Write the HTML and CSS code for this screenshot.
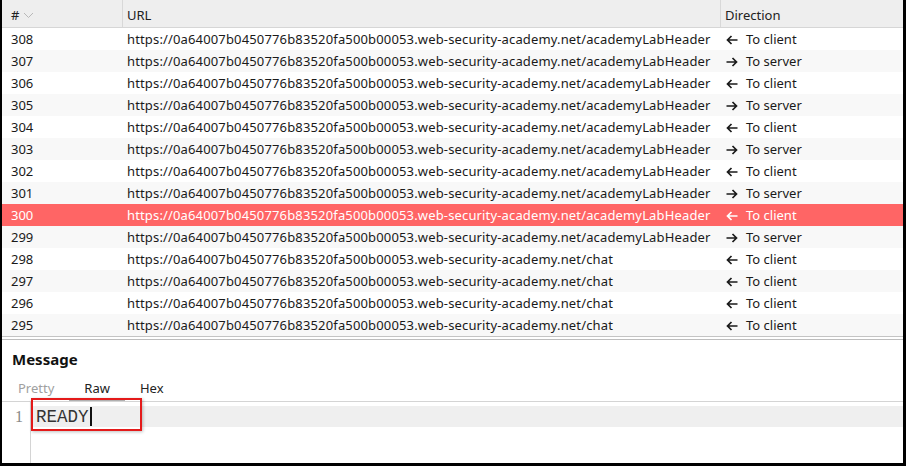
FILE: index.html
```html
<!DOCTYPE html>
<html>
<head>
<meta charset="utf-8">
<link rel="stylesheet" href="styles.css">
</head>
<body>
<div class="frame">
  <div class="table">
    <div class="thead">
      <div class="th th-num"># <svg class="sort" width="11" height="7" viewBox="0 0 11 7"><path d="M1 1 L5.5 5.5 L10 1" fill="none" stroke="#b8b8b8" stroke-width="1"/></svg></div>
      <div class="th th-url">URL</div>
      <div class="th th-dir">Direction</div>
    </div>
    <div class="tbody" id="rows"></div>
  </div>
  <div class="sep"></div>
  <div class="message">
    <div class="msg-title">Message</div>
    <div class="tabs">
      <span class="tab tab-muted">Pretty</span>
      <span class="tab tab-active">Raw</span>
      <span class="tab">Hex</span>
    </div>
    <div class="editor">
      <div class="gutter"><div class="ln">1</div></div>
      <div class="code">
        <div class="line current"><span class="ready">READY</span><span class="caret"></span></div>
      </div>
      <div class="redbox"></div>
    </div>
  </div>
</div>
<script>
const base = "https://0a64007b0450776b83520fa500b00053.web-security-academy.net/";
const data = [
  [308,"academyLabHeader","c"],[307,"academyLabHeader","s"],[306,"academyLabHeader","c"],
  [305,"academyLabHeader","s"],[304,"academyLabHeader","c"],[303,"academyLabHeader","s"],
  [302,"academyLabHeader","c"],[301,"academyLabHeader","s"],[300,"academyLabHeader","c"],
  [299,"academyLabHeader","s"],[298,"chat","c"],[297,"chat","c"],[296,"chat","c"],[295,"chat","c"]
];
const left = '<svg class="arrow" width="12" height="10" viewBox="0 0 12 10"><path d="M11.5 5 H1.5 M5.5 1 L1.5 5 L5.5 9" fill="none" stroke="currentColor" stroke-width="1.7"/></svg>';
const right = '<svg class="arrow" width="12" height="10" viewBox="0 0 12 10"><path d="M0.5 5 H10.5 M6.5 1 L10.5 5 L6.5 9" fill="none" stroke="currentColor" stroke-width="1.7"/></svg>';
const rows = document.getElementById("rows");
data.forEach((d,i)=>{
  const r = document.createElement("div");
  r.className = "row" + (i%2 ? " alt" : "") + (d[0]===300 ? " sel" : "");
  r.innerHTML = '<div class="td td-num">'+d[0]+'</div><div class="td td-url">'+base+d[1]+'</div><div class="td td-dir">'+(d[2]==="c"?left+'<span>To client</span>':right+'<span>To server</span>')+'</div>';
  rows.appendChild(r);
});
</script>
</body>
</html>
```
FILE: styles.css
```css
* { box-sizing: border-box; }
html, body { margin: 0; padding: 0; background: #fff; }
body {
  font-family: "Noto Sans", "Open Sans", "DejaVu Sans", sans-serif;
  font-size: 13px;
  color: #1a1a1a;
}
.frame {
  width: 906px;
  height: 466px;
  border-left: 2px solid #000;
  border-right: 3px solid #000;
  border-bottom: 3px solid #000;
  overflow: hidden;
  display: flex;
  flex-direction: column;
}
.thead, .row {
  display: grid;
  grid-template-columns: 120px 598px 1fr;
}
.thead {
  height: 28px;
  background: #eeeeee;
  border-bottom: 1px solid #d6d6d6;
}
.th {
  display: flex;
  align-items: center;
  padding-left: 4px;
  padding-top: 2px;
  color: #222;
  white-space: nowrap;
}
.th-num { padding-left: 9px; }
.th + .th { border-left: 1px solid #d8d8d8; }
.sort { margin-left: 4px; margin-top: 1px; }
.row { height: 22px; background: #fff; }
.row.alt { background: #f8f8f8; }
.row.sel { background: #ff6565; color: #fff; }
.td {
  display: flex;
  align-items: center;
  white-space: nowrap;
  overflow: hidden;
  padding-left: 5px;
}
.td-num { padding-left: 9px; }
.td-url { letter-spacing: 0.15px; }
.td-dir { padding-left: 6px; }
.arrow { margin-right: 8px; margin-top: 1px; }
.sep {
  height: 4px;
  border-top: 1px solid #c4c4c4;
  border-bottom: 1px solid #bdbdbd;
}
.message { flex: 1; display: flex; flex-direction: column; }
.msg-title {
  font-weight: 700;
  font-size: 15px;
  line-height: 20px;
  padding: 9px 0 0 10px;
  height: 35px;
  color: #111;
}
.tabs {
  display: flex;
  height: 27px;
  border-bottom: 1px solid #d4d4d4;
  padding-left: 1px;
}
.tab {
  padding: 4px 15px 0;
  line-height: 18px;
  color: #222;
}
.tab-muted { color: #a0a0a0; }
.tab-active { box-shadow: inset 0 -1px 0 #b0b0b0; }
.editor {
  position: relative;
  flex: 1;
  display: flex;
  padding-top: 4px;
}
.gutter {
  width: 29px;
  border-right: 1px solid #d4d4d4;
  margin-top: -4px;
  padding-top: 4px;
}
.ln {
  height: 21px;
  line-height: 21px;
  text-align: right;
  padding-right: 7px;
  color: #888;
  font-family: "Liberation Serif", serif;
  font-size: 16px;
}
.code { flex: 1; }
.line {
  height: 21px;
  display: flex;
  align-items: center;
  padding-left: 5px;
}
.line.current { background: #efefef; }
.ready {
  font-family: "Liberation Mono", monospace;
  font-size: 17.5px;
  color: #333;
}
.caret {
  width: 2px;
  height: 19px;
  background: #111;
  margin-left: 1px;
}
.redbox {
  position: absolute;
  left: 29px;
  top: -4px;
  width: 111px;
  height: 33px;
  border: 2px solid #e41a1a;
  box-shadow: 1px 1px 3px rgba(0,0,0,0.25);
}
```
